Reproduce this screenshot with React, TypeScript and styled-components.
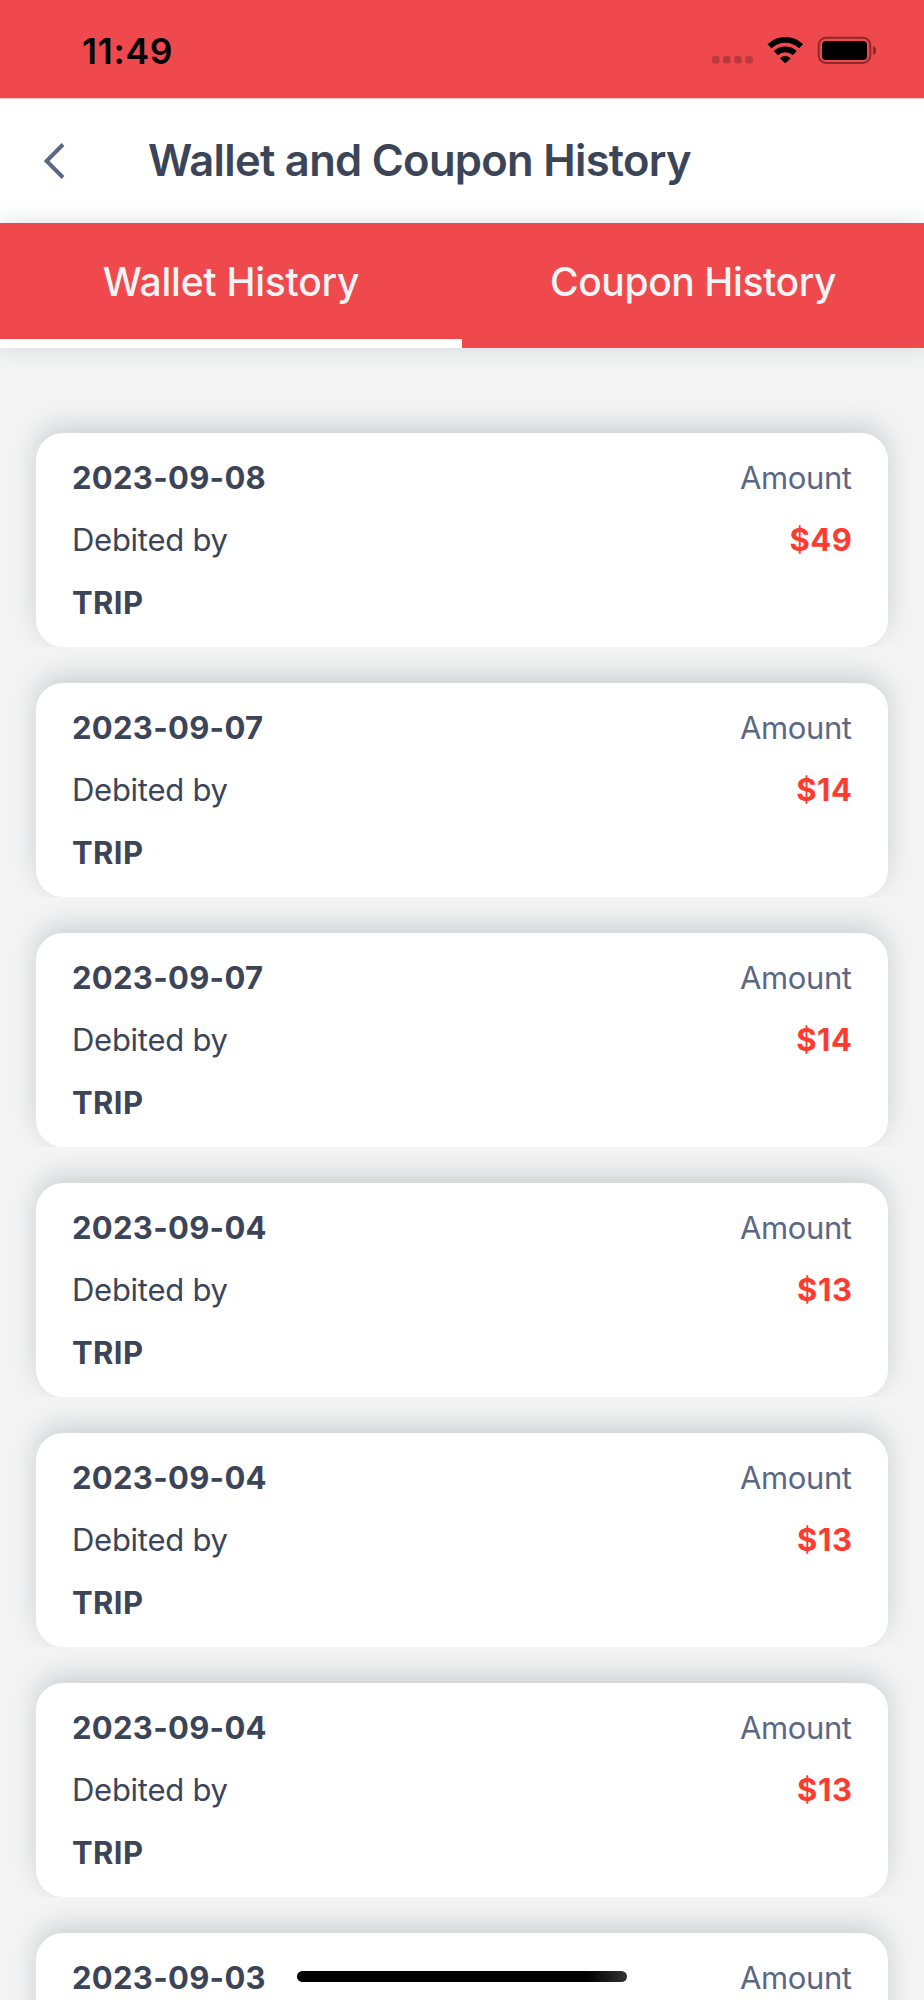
import React from "react";
import styled, { createGlobalStyle } from "styled-components";

const GlobalStyle = createGlobalStyle`
  * { box-sizing: border-box; }
  body {
    margin: 0;
    background: #f4f4f4;
    font-family: Inter, "Liberation Sans", sans-serif;
  }
`;

const Screen = styled.div`
  position: relative;
  width: 924px;
  height: 2000px;
  overflow: hidden;
  background: #f4f4f4;
`;

const StatusBar = styled.div`
  display: flex;
  justify-content: space-between;
  height: 98px;
  padding: 29px 47px 0 82px;
  background: #f0494d;
`;

const Clock = styled.span`
  padding-top: 1px;
  font-size: 35.5px;
  line-height: 44px;
  font-weight: 600;
  letter-spacing: 0.7px;
  color: #000;
`;

const StatusIcons = styled.svg`
  display: block;
  width: 166px;
  height: 32px;
  margin-top: 6px;
`;

const Header = styled.header`
  display: flex;
  align-items: center;
  height: 125px;
  padding: 0 0 0 42px;
  background: #fff;
  border-top: 1px solid #fbc3c5;
`;

const BackIcon = styled.svg`
  width: 24px;
  height: 38px;
`;

const Title = styled.h1`
  margin: 0 0 2px 82px;
  font-size: 43.5px;
  line-height: 54px;
  font-weight: 600;
  letter-spacing: -0.7px;
  color: #3c4557;
  white-space: nowrap;
`;

const Tabs = styled.nav`
  position: relative;
  display: flex;
  height: 125px;
  background: #f0494d;
  box-shadow: 0 0 22px rgba(60, 75, 90, 0.18);
`;

const Tab = styled.div<{ $active?: boolean }>`
  flex: 1;
  height: 125px;
  padding-top: 34px;
  border-bottom: 9px solid ${(p) => (p.$active ? "#fff" : "#f0494d")};
  text-align: center;
  font-size: 39px;
  line-height: 50px;
  font-weight: 500;
  letter-spacing: ${(p) => (p.$active ? -0.25 : -0.4)}px;
  color: #f4f4f4;
  white-space: nowrap;
`;

const List = styled.main`
  padding-top: 49px;
`;

const Entry = styled.div`
  height: 250px;
  padding: 36px 36px 0;
  overflow: hidden;
`;

const Card = styled.article`
  display: flex;
  justify-content: space-between;
  height: 214px;
  padding: 14px 36px 0 36px;
  border-radius: 27px;
  background: #fff;
  box-shadow: 0 -8px 26px rgba(60, 69, 87, 0.21);
`;

const Column = styled.div<{ $end?: boolean }>`
  display: flex;
  flex-direction: column;
  align-items: ${(p) => (p.$end ? "flex-end" : "flex-start")};
`;

const Line = styled.span<{ $bold?: boolean; $color?: string; $track?: number }>`
  font-size: 31px;
  line-height: 62.4px;
  font-weight: ${(p) => (p.$bold ? 700 : 400)};
  letter-spacing: ${(p) => p.$track ?? 0}px;
  margin-right: ${(p) => -(p.$track ?? 0)}px;
  color: ${(p) => p.$color ?? "#3c4557"};
  white-space: nowrap;
`;

const HomeIndicator = styled.div`
  position: absolute;
  left: 297px;
  top: 1971px;
  width: 330px;
  height: 11px;
  border-radius: 6px;
  background: linear-gradient(90deg, #000 88%, #333 100%);
`;

type HistoryEntry = { date: string; source?: string; amount?: string };

const entries: HistoryEntry[] = [
  { date: "2023-09-08", source: "TRIP", amount: "$49" },
  { date: "2023-09-07", source: "TRIP", amount: "$14" },
  { date: "2023-09-07", source: "TRIP", amount: "$14" },
  { date: "2023-09-04", source: "TRIP", amount: "$13" },
  { date: "2023-09-04", source: "TRIP", amount: "$13" },
  { date: "2023-09-04", source: "TRIP", amount: "$13" },
  { date: "2023-09-03" },
];

export default function App() {
  return (
    <>
      <GlobalStyle />
      <Screen>
        <StatusBar>
          <Clock>11:49</Clock>
          <StatusIcons viewBox="711 35 166 32">
            <g fill="#000" fillOpacity="0.22">
              {[712, 723, 734.2, 745.3].map((x) => (
                <rect key={x} x={x} y="56" width="7.6" height="7.4" rx="2.2" />
              ))}
            </g>
            <g fill="none" stroke="#000" strokeWidth="5.8">
              <path d="M769.5 46.3A22.5 22.5 0 0 1 801.1 46.3" />
              <path d="M775.8 53.1A14 14 0 0 1 794.8 53.1" />
            </g>
            <path d="M779.9 58.3Q785.3 53.7 790.7 58.3L786.1 62.7Q785.3 63.4 784.5 62.7Z" />
            <rect x="818.7" y="37.7" width="51.6" height="25.3" rx="7.5" fill="none" stroke="#000" strokeOpacity="0.42" strokeWidth="2" />
            <rect x="822" y="41" width="45" height="19" rx="4" />
            <path d="M873 46Q876 47 876 50.5Q876 54 873 55Z" fillOpacity="0.45" />
          </StatusIcons>
        </StatusBar>
        <Header>
          <BackIcon viewBox="0 0 24 38" fill="none" stroke="#5c6784" strokeWidth="4">
            <path d="M21 2.5L4.6 19L21 35.5" />
          </BackIcon>
          <Title>Wallet and Coupon History</Title>
        </Header>
        <Tabs>
          <Tab $active>Wallet History</Tab>
          <Tab>Coupon History</Tab>
        </Tabs>
        <List>
          {entries.map((e, i) => (
            <Entry key={i}>
              <Card>
                <Column>
                  <Line $bold $track={0.3}>{e.date}</Line>
                  {e.source && (
                    <>
                      <Line $track={-0.27}>Debited by</Line>
                      <Line $bold $track={0.4}>{e.source}</Line>
                    </>
                  )}
                </Column>
                <Column $end>
                  <Line $color="#5c6784" $track={-0.4}>Amount</Line>
                  {e.amount && (
                    <Line $bold $color="#ff3b30" $track={0.6}>{e.amount}</Line>
                  )}
                </Column>
              </Card>
            </Entry>
          ))}
        </List>
        <HomeIndicator />
      </Screen>
    </>
  );
}
